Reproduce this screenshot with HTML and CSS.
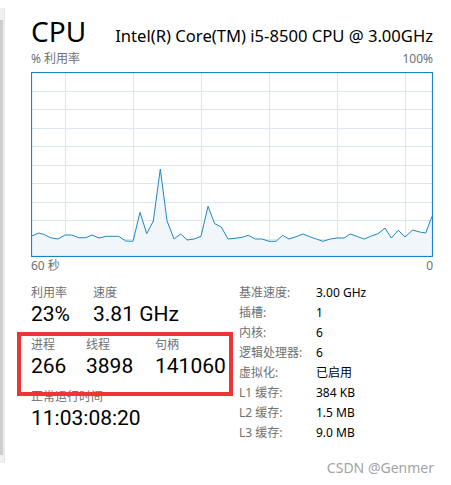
FILE: index.html
```html
<!DOCTYPE html>
<html>
<head>
    <title>CPU</title>
    <link rel="stylesheet" href="styles.css">
</head>
<body>
    <div class="window">
        <div class="scroll-track"><div class="scroll-thumb"></div></div>

        <div class="panel">
            <div class="title-row">
                <span class="title">CPU</span>
                <span class="model">Intel(R) Core(TM) i5-8500 CPU @ 3.00GHz</span>
            </div>

            <div class="axis-row">
                <span>% 利用率</span>
                <span>100%</span>
            </div>

            <!-- usage history, last 60 seconds -->
            <svg class="graph" width="402" height="185" viewBox="0 0 402 185">
                <g class="grid">
                    <path d="M0 19.5H402M0 37.5H402M0 56.5H402M0 74.5H402M0 93.5H402M0 111.5H402M0 130.5H402M0 148.5H402M0 167.5H402"/>
                    <path d="M34.5 0V185M102.5 0V185M170.5 0V185M238.5 0V185M306.5 0V185M374.5 0V185"/>
                </g>
                <polygon class="area" points="0,185 0,164.3 7.7,161 13.7,162.7 19.3,165.7 27,167 34,163 40.7,163 47.7,165.7 54.7,165.7 61,163 68,166 75.3,164.3 87.7,164.3 94.7,169 102,169.3 109,140.3 115.7,161.7 122.3,149 129.3,97 136,148.7 143,167 149.7,162 156.3,168 163,167 170,164.3 177,134.3 183.7,151.7 190.3,155 197,167 204,166.3 211,165.3 217.3,163.3 224.3,167 231,167 238,169.3 245,169.3 251.7,163.3 258,167 265,164.7 272,162 278.7,164.7 285.3,167 292,169.3 299.3,167 306,166 313,166 319.3,162 326.7,164.7 333.3,167 340.3,164 347,161.7 354,156 360.3,166 367.3,158.3 374,165 381.7,158 388.7,160 394.7,161 401,144.3 401,185"/>
                <polyline class="line" points="0,164.3 7.7,161 13.7,162.7 19.3,165.7 27,167 34,163 40.7,163 47.7,165.7 54.7,165.7 61,163 68,166 75.3,164.3 87.7,164.3 94.7,169 102,169.3 109,140.3 115.7,161.7 122.3,149 129.3,97 136,148.7 143,167 149.7,162 156.3,168 163,167 170,164.3 177,134.3 183.7,151.7 190.3,155 197,167 204,166.3 211,165.3 217.3,163.3 224.3,167 231,167 238,169.3 245,169.3 251.7,163.3 258,167 265,164.7 272,162 278.7,164.7 285.3,167 292,169.3 299.3,167 306,166 313,166 319.3,162 326.7,164.7 333.3,167 340.3,164 347,161.7 354,156 360.3,166 367.3,158.3 374,165 381.7,158 388.7,160 394.7,161 401,144.3"/>
                <rect class="frame" x="0.5" y="0.5" width="401" height="184"/>
            </svg>

            <div class="axis-row axis-bottom">
                <span>60 秒</span>
                <span>0</span>
            </div>

            <div class="stats">
                <div class="stats-left">
                    <div class="group cols-usage">
                        <div class="label">利用率</div>
                        <div class="label">速度</div>
                        <div class="value">23%</div>
                        <div class="value">3.81 GHz</div>
                    </div>
                    <div class="group cols-counts marked">
                        <div class="label">进程</div>
                        <div class="label">线程</div>
                        <div class="label">句柄</div>
                        <div class="value">266</div>
                        <div class="value">3898</div>
                        <div class="value">141060</div>
                    </div>
                    <div class="group">
                        <div class="label">正常运行时间</div>
                        <div class="value">11:03:08:20</div>
                    </div>
                </div>

                <div class="specs">
                    <span class="label">基准速度:</span><span>3.00 GHz</span>
                    <span class="label">插槽:</span><span>1</span>
                    <span class="label">内核:</span><span>6</span>
                    <span class="label">逻辑处理器:</span><span>6</span>
                    <span class="label">虚拟化:</span><span>已启用</span>
                    <span class="label">L1 缓存:</span><span>384 KB</span>
                    <span class="label">L2 缓存:</span><span>1.5 MB</span>
                    <span class="label">L3 缓存:</span><span>9.0 MB</span>
                </div>
            </div>
        </div>
    </div>

    <div class="watermark">CSDN @Genmer</div>
</body>
</html>
```

FILE: styles.css
```css
body {
    margin: 0;
    background: #fff;
    font-family: "Noto Sans", "Noto Sans CJK SC", sans-serif;
    color: #000;
    width: 451px;
    height: 485px;
    overflow: hidden;
    position: relative;
}
.window {
    display: flex;
}

/* left edge of the window: scroll bar */
.scroll-track {
    width: 4px;
    height: 455px;
    margin-top: 8px;
    background: #f0f0f0;
    border-right: 1px solid #e6e6e6;
}
.scroll-thumb {
    width: 3px;
    height: 435px;
    margin-top: 12px;
    background: #cdcdcd;
}

.panel {
    width: 402px;
    padding: 14px 0 0 26px;
}

.title-row {
    display: flex;
    justify-content: space-between;
    align-items: baseline;
    height: 34px;
}
.title {
    font-size: 28px;
    line-height: 34px;
}
.model {
    font-size: 16.6px;
    line-height: 34px;
}

.axis-row {
    display: flex;
    justify-content: space-between;
    font-size: 12px;
    line-height: 16px;
    color: #707070;
    margin-top: 3px;
}
.axis-bottom {
    margin-top: 1px;
}

.graph {
    display: block;
    margin-top: 5px;
}
.grid path {
    stroke: #d9e7f1;
    stroke-width: 1;
    fill: none;
}
.area {
    fill: #f1f6fa;
}
.line {
    fill: none;
    stroke: #1f87c6;
    stroke-width: 1;
    stroke-linejoin: round;
}
.frame {
    fill: none;
    stroke: #1a82c2;
    stroke-width: 1.2;
}

.stats {
    display: flex;
    margin-top: 9px;
}
.stats-left {
    width: 208px;
    display: flex;
    flex-direction: column;
    gap: 9px;
}
.group {
    display: grid;
}
.cols-usage {
    grid-template-columns: 62px auto;
}
.cols-counts {
    grid-template-columns: 55px 69px auto;
}
.label {
    font-size: 12px;
    line-height: 20px;
    color: #707070;
}
.value {
    font-family: Roboto, "Noto Sans", sans-serif;
    font-size: 21px;
    line-height: 23px;
    white-space: nowrap;
}

/* red box drawn around the process / thread / handle counts */
.marked {
    position: relative;
}
.marked::after {
    content: "";
    position: absolute;
    left: -14px;
    top: -3px;
    width: 216px;
    height: 64px;
    box-sizing: border-box;
    border: 4px solid #ee3437;
}

.specs {
    display: grid;
    grid-template-columns: 77px auto;
    font-size: 12px;
    line-height: 20px;
    align-content: start;
}

.watermark {
    position: absolute;
    right: 17px;
    top: 459px;
    font-size: 14px;
    line-height: 18px;
    color: #a3a3a3;
}
```
